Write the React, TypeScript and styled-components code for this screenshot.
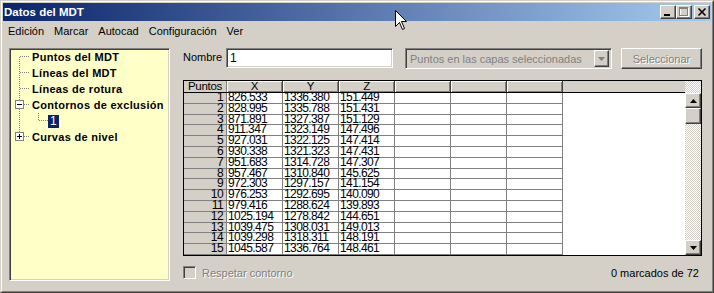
import React from "react";
import styled, { createGlobalStyle, css } from "styled-components";

const FONT = `"Liberation Sans", Arial, Helvetica, sans-serif`;

const GlobalStyle = createGlobalStyle`
  * { box-sizing: border-box; }
  html, body { margin: 0; padding: 0; background: #D4D0C8; }
  body { font-family: ${FONT}; font-size: 11px; color: #000; overflow: hidden; }
`;

const raised = css`
  background: #d4d0c8;
  border: 1px solid;
  border-color: #ffffff #404040 #404040 #ffffff;
  box-shadow: inset -1px -1px 0 #808080;
`;

const sunken = css`
  border: 1px solid;
  border-color: #808080 #ffffff #ffffff #808080;
  box-shadow: inset 1px 1px 0 #404040, inset -1px -1px 0 #d4d0c8;
`;

const dither = css`
  background-color: #ffffff;
  background-image: repeating-conic-gradient(#d4d0c8 0% 25%, #ffffff 0% 50%);
  background-size: 2px 2px;
`;

const Frame = styled.div`
  position: relative;
  width: 714px;
  height: 293px;
  background: #d4d0c8;
  border: 1px solid;
  border-color: #d4d0c8 #404040 #404040 #d4d0c8;
`;

const FrameInner = styled.div`
  height: 100%;
  border: 1px solid;
  border-color: #ffffff #808080 #808080 #ffffff;
  padding: 1px;
  display: flex;
  flex-direction: column;
`;

const TitleBar = styled.div`
  height: 18px;
  flex-shrink: 0;
  display: flex;
  align-items: center;
  padding: 0 1px 0 1px;
  background: linear-gradient(to right, #0a246a, #a6caf0);
`;

const Title = styled.div`
  flex: 1;
  color: #ffffff;
  font-weight: bold;
  font-size: 11.5px;
  white-space: nowrap;
`;

const CaptionButton = styled.div<{ $gap?: number }>`
  ${raised};
  width: 16px;
  height: 14px;
  margin-left: ${(p) => p.$gap ?? 0}px;
  display: flex;
  align-items: center;
  justify-content: center;
  svg { display: block; }
`;

const MenuBar = styled.div`
  height: 20px;
  flex-shrink: 0;
  display: flex;
  align-items: center;
  gap: 10px;
  padding-left: 5px;
`;

const MenuItem = styled.span`
  font-size: 11px;
  white-space: nowrap;
`;

const Body = styled.div`
  flex: 1;
  min-height: 0;
  display: flex;
  padding: 7px 9px 9px 6px;
`;

const TreeBox = styled.div`
  ${sunken};
  width: 161px;
  flex-shrink: 0;
  background: #ffffc8;
  display: flex;
  flex-direction: column;
`;

const TreeRow = styled.div`
  height: 16px;
  display: flex;
  align-items: center;
  svg { display: block; flex-shrink: 0; }
`;

const TreeLabel = styled.span`
  margin-left: 2px;
  font-weight: bold;
  font-size: 11px;
  letter-spacing: 0.3px;
  white-space: nowrap;
`;

const TreeSelected = styled.span`
  height: 13px;
  line-height: 13px;
  padding: 0 2px;
  background: #0a246a;
  color: #ffffff;
  font-size: 12px;
`;

const RightPanel = styled.div`
  flex: 1;
  margin-left: 13px;
  display: flex;
  flex-direction: column;
  min-width: 0;
`;

const FormRow = styled.div`
  height: 21px;
  flex-shrink: 0;
  display: flex;
  align-items: flex-start;
`;

const Label = styled.span`
  width: 43px;
  line-height: 19px;
  flex-shrink: 0;
`;

const TextInput = styled.div`
  ${sunken};
  width: 167px;
  height: 20px;
  background: #ffffff;
  padding: 0 3px;
  line-height: 18px;
  font-size: 12px;
`;

const Combo = styled.div`
  ${sunken};
  margin-left: 12px;
  width: 207px;
  height: 21px;
  background: #d4d0c8;
  display: flex;
  align-items: center;
  padding: 2px;
`;

const ComboText = styled.span`
  flex: 1;
  color: #808080;
  padding-left: 2px;
  white-space: nowrap;
`;

const ComboArrow = styled.div`
  ${raised};
  width: 15px;
  height: 17px;
  display: flex;
  align-items: center;
  justify-content: center;
  svg { display: block; }
`;

const PushButton = styled.div`
  ${raised};
  margin-left: 9px;
  width: 81px;
  height: 21px;
  display: flex;
  align-items: center;
  justify-content: center;
  color: #808080;
  text-shadow: 1px 1px 0 #ffffff;
`;

const Grid = styled.div`
  margin-top: 11px;
  height: 176px;
  flex-shrink: 0;
  border: 1px solid #000000;
  display: flex;
  background: #ffffff;
  overflow: hidden;
`;

const Table = styled.div`
  flex: 1;
  min-width: 0;
  display: flex;
  flex-direction: column;
  overflow: hidden;
`;

const HeadRow = styled.div`
  height: 12px;
  flex-shrink: 0;
  display: flex;
  background: #d4d0c8;
  border-bottom: 1px solid #000000;
`;

const HeadCell = styled.div<{ $w?: number; $raised?: boolean }>`
  width: ${(p) => (p.$w ? `${p.$w}px` : "auto")};
  flex: ${(p) => (p.$w ? "0 0 auto" : "1")};
  height: 11px;
  line-height: 11px;
  text-align: center;
  background: #d4d0c8;
  font-size: 11.5px;
  letter-spacing: -0.3px;
  ${(p) =>
    p.$raised
      ? css`
          border-right: 1px solid #404040;
          box-shadow: inset 1px 1px 0 #ffffff, inset -1px -1px 0 #808080;
        `
      : p.$w
      ? css`
          border-right: 1px solid #808080;
        `
      : ""}
`;

const DataRow = styled.div`
  height: 10.8px;
  flex-shrink: 0;
  display: flex;
  font-size: 12px;
  letter-spacing: -0.6px;
`;

const RowHead = styled.div`
  width: 43px;
  flex-shrink: 0;
  background: #d4d0c8;
  border-right: 1px solid #808080;
  border-bottom: 1px solid #808080;
  text-align: right;
  padding-right: 3px;
  line-height: 9.8px;
  white-space: nowrap;
`;

const Cell = styled.div`
  width: 56px;
  flex-shrink: 0;
  border-right: 1px solid #808080;
  border-bottom: 1px solid #808080;
  padding-left: 1px;
  line-height: 9.8px;
  white-space: nowrap;
`;

const Filler = styled.div`
  flex: 1;
`;

const ScrollBar = styled.div`
  width: 16px;
  flex-shrink: 0;
  display: flex;
  flex-direction: column;
`;

const ScrollCorner = styled.div`
  ${dither};
  height: 12px;
  flex-shrink: 0;
`;

const ScrollButton = styled.div<{ $h: number }>`
  ${raised};
  height: ${(p) => p.$h}px;
  flex-shrink: 0;
  display: flex;
  align-items: center;
  justify-content: center;
  svg { display: block; }
`;

const ScrollTrack = styled.div`
  ${dither};
  flex: 1;
`;

const Footer = styled.div`
  margin-top: 5px;
  height: 23px;
  flex-shrink: 0;
  display: flex;
  align-items: center;
`;

const CheckBox = styled.div`
  ${sunken};
  width: 13px;
  height: 13px;
  background: #d4d0c8;
  flex-shrink: 0;
`;

const DisabledText = styled.span`
  margin-left: 6px;
  color: #808080;
  text-shadow: 1px 1px 0 #ffffff;
  white-space: nowrap;
`;

const Status = styled.span`
  margin-left: auto;
  padding-right: 3px;
  white-space: nowrap;
`;

const Cursor = styled.svg`
  position: absolute;
  left: 394px;
  top: 9px;
  pointer-events: none;
`;

type Variant = "first" | "mid" | "last" | "child";

const Connector: React.FC<{ variant: Variant; expander?: "plus" | "minus" }> = ({
  variant,
  expander,
}) => {
  const w = variant === "child" ? 38 : 20;
  const dot = { stroke: "#808080", strokeWidth: 1, strokeDasharray: "1 1" } as const;
  return (
    <svg width={w} height={16} viewBox={`0 0 ${w} 16`} shapeRendering="crispEdges">
      {variant === "first" && <line x1={9.5} y1={8} x2={9.5} y2={16} {...dot} />}
      {(variant === "mid" || variant === "child") && (
        <line x1={9.5} y1={0} x2={9.5} y2={16} {...dot} />
      )}
      {variant === "last" && <line x1={9.5} y1={0} x2={9.5} y2={8} {...dot} />}
      {variant === "child" ? (
        <>
          <line x1={28.5} y1={0} x2={28.5} y2={8} {...dot} />
          <line x1={29} y1={7.5} x2={38} y2={7.5} {...dot} />
        </>
      ) : (
        <line x1={10} y1={7.5} x2={20} y2={7.5} {...dot} />
      )}
      {expander && (
        <>
          <rect x={5.5} y={3.5} width={8} height={8} fill="#ffffff" stroke="#808080" />
          <line x1={7} y1={7.5} x2={12} y2={7.5} stroke="#000" />
          {expander === "plus" && <line x1={9.5} y1={5} x2={9.5} y2={10} stroke="#000" />}
        </>
      )}
    </svg>
  );
};

const points: [string, string, string, string][] = [
  ["1", "826.533", "1336.380", "151.449"],
  ["2", "828.995", "1335.788", "151.431"],
  ["3", "871.891", "1327.387", "151.129"],
  ["4", "911.347", "1323.149", "147.496"],
  ["5", "927.031", "1322.125", "147.414"],
  ["6", "930.338", "1321.323", "147.431"],
  ["7", "951.683", "1314.728", "147.307"],
  ["8", "957.467", "1310.840", "145.625"],
  ["9", "972.303", "1297.157", "141.154"],
  ["10", "976.253", "1292.695", "140.090"],
  ["11", "979.416", "1288.624", "139.893"],
  ["12", "1025.194", "1278.842", "144.651"],
  ["13", "1039.475", "1308.031", "149.013"],
  ["14", "1039.298", "1318.311", "148.191"],
  ["15", "1045.587", "1336.764", "148.461"],
];

export default function App() {
  return (
    <>
      <GlobalStyle />
      <Frame>
        <FrameInner>
          <TitleBar>
            <Title>Datos del MDT</Title>
            <CaptionButton>
              <svg width={14} height={12} shapeRendering="crispEdges">
                <rect x={3} y={8} width={6} height={2} fill="#000" />
              </svg>
            </CaptionButton>
            <CaptionButton>
              <svg width={14} height={12} shapeRendering="crispEdges">
                <rect x={3.5} y={2.5} width={8} height={8} fill="none" stroke="#fff" />
                <rect x={2.5} y={1.5} width={8} height={8} fill="none" stroke="#808080" />
                <rect x={2} y={2} width={9} height={1} fill="#808080" />
              </svg>
            </CaptionButton>
            <CaptionButton $gap={2}>
              <svg width={14} height={12}>
                <path d="M3.5 2.5 L10.5 9.5 M10.5 2.5 L3.5 9.5" stroke="#000" strokeWidth={1.6} />
              </svg>
            </CaptionButton>
          </TitleBar>
          <MenuBar>
            <MenuItem>Edición</MenuItem>
            <MenuItem>Marcar</MenuItem>
            <MenuItem>Autocad</MenuItem>
            <MenuItem>Configuración</MenuItem>
            <MenuItem>Ver</MenuItem>
          </MenuBar>
          <Body>
            <TreeBox>
              <TreeRow>
                <Connector variant="first" />
                <TreeLabel>Puntos del MDT</TreeLabel>
              </TreeRow>
              <TreeRow>
                <Connector variant="mid" />
                <TreeLabel>Líneas del MDT</TreeLabel>
              </TreeRow>
              <TreeRow>
                <Connector variant="mid" />
                <TreeLabel>Líneas de rotura</TreeLabel>
              </TreeRow>
              <TreeRow>
                <Connector variant="mid" expander="minus" />
                <TreeLabel>Contornos de exclusión</TreeLabel>
              </TreeRow>
              <TreeRow>
                <Connector variant="child" />
                <TreeSelected>1</TreeSelected>
              </TreeRow>
              <TreeRow>
                <Connector variant="last" expander="plus" />
                <TreeLabel>Curvas de nivel</TreeLabel>
              </TreeRow>
            </TreeBox>
            <RightPanel>
              <FormRow>
                <Label>Nombre</Label>
                <TextInput>1</TextInput>
                <Combo>
                  <ComboText>Puntos en las capas seleccionadas</ComboText>
                  <ComboArrow>
                    <svg width={7} height={4}>
                      <path d="M0 0 H7 L3.5 4 Z" fill="#808080" />
                    </svg>
                  </ComboArrow>
                </Combo>
                <PushButton>Seleccionar</PushButton>
              </FormRow>
              <Grid>
                <Table>
                  <HeadRow>
                    <HeadCell $w={43}>Puntos</HeadCell>
                    <HeadCell $w={56} $raised>X</HeadCell>
                    <HeadCell $w={56} $raised>Y</HeadCell>
                    <HeadCell $w={56} $raised>Z</HeadCell>
                    <HeadCell $w={56} $raised />
                    <HeadCell $w={56} $raised />
                    <HeadCell $w={56} $raised />
                    <HeadCell />
                  </HeadRow>
                  {points.map(([n, x, y, z]) => (
                    <DataRow key={n}>
                      <RowHead>{n}</RowHead>
                      <Cell>{x}</Cell>
                      <Cell>{y}</Cell>
                      <Cell>{z}</Cell>
                      <Cell />
                      <Cell />
                      <Cell />
                      <Filler />
                    </DataRow>
                  ))}
                </Table>
                <ScrollBar>
                  <ScrollCorner />
                  <ScrollButton $h={15}>
                    <svg width={7} height={4}>
                      <path d="M3.5 0 L7 4 H0 Z" fill="#000" />
                    </svg>
                  </ScrollButton>
                  <ScrollButton $h={16} />
                  <ScrollTrack />
                  <ScrollButton $h={15}>
                    <svg width={7} height={4}>
                      <path d="M0 0 H7 L3.5 4 Z" fill="#000" />
                    </svg>
                  </ScrollButton>
                </ScrollBar>
              </Grid>
              <Footer>
                <CheckBox />
                <DisabledText>Respetar contorno</DisabledText>
                <Status>0 marcados de 72</Status>
              </Footer>
            </RightPanel>
          </Body>
        </FrameInner>
        <Cursor width={13} height={21} viewBox="0 0 13 21">
          <path
            d="M0.5 0.5 V16.5 L4.5 12.5 L7.5 19.5 L9.5 18.5 L6.5 11.5 H11.5 Z"
            fill="#ffffff"
            stroke="#000000"
            strokeWidth={1}
          />
        </Cursor>
      </Frame>
    </>
  );
}
